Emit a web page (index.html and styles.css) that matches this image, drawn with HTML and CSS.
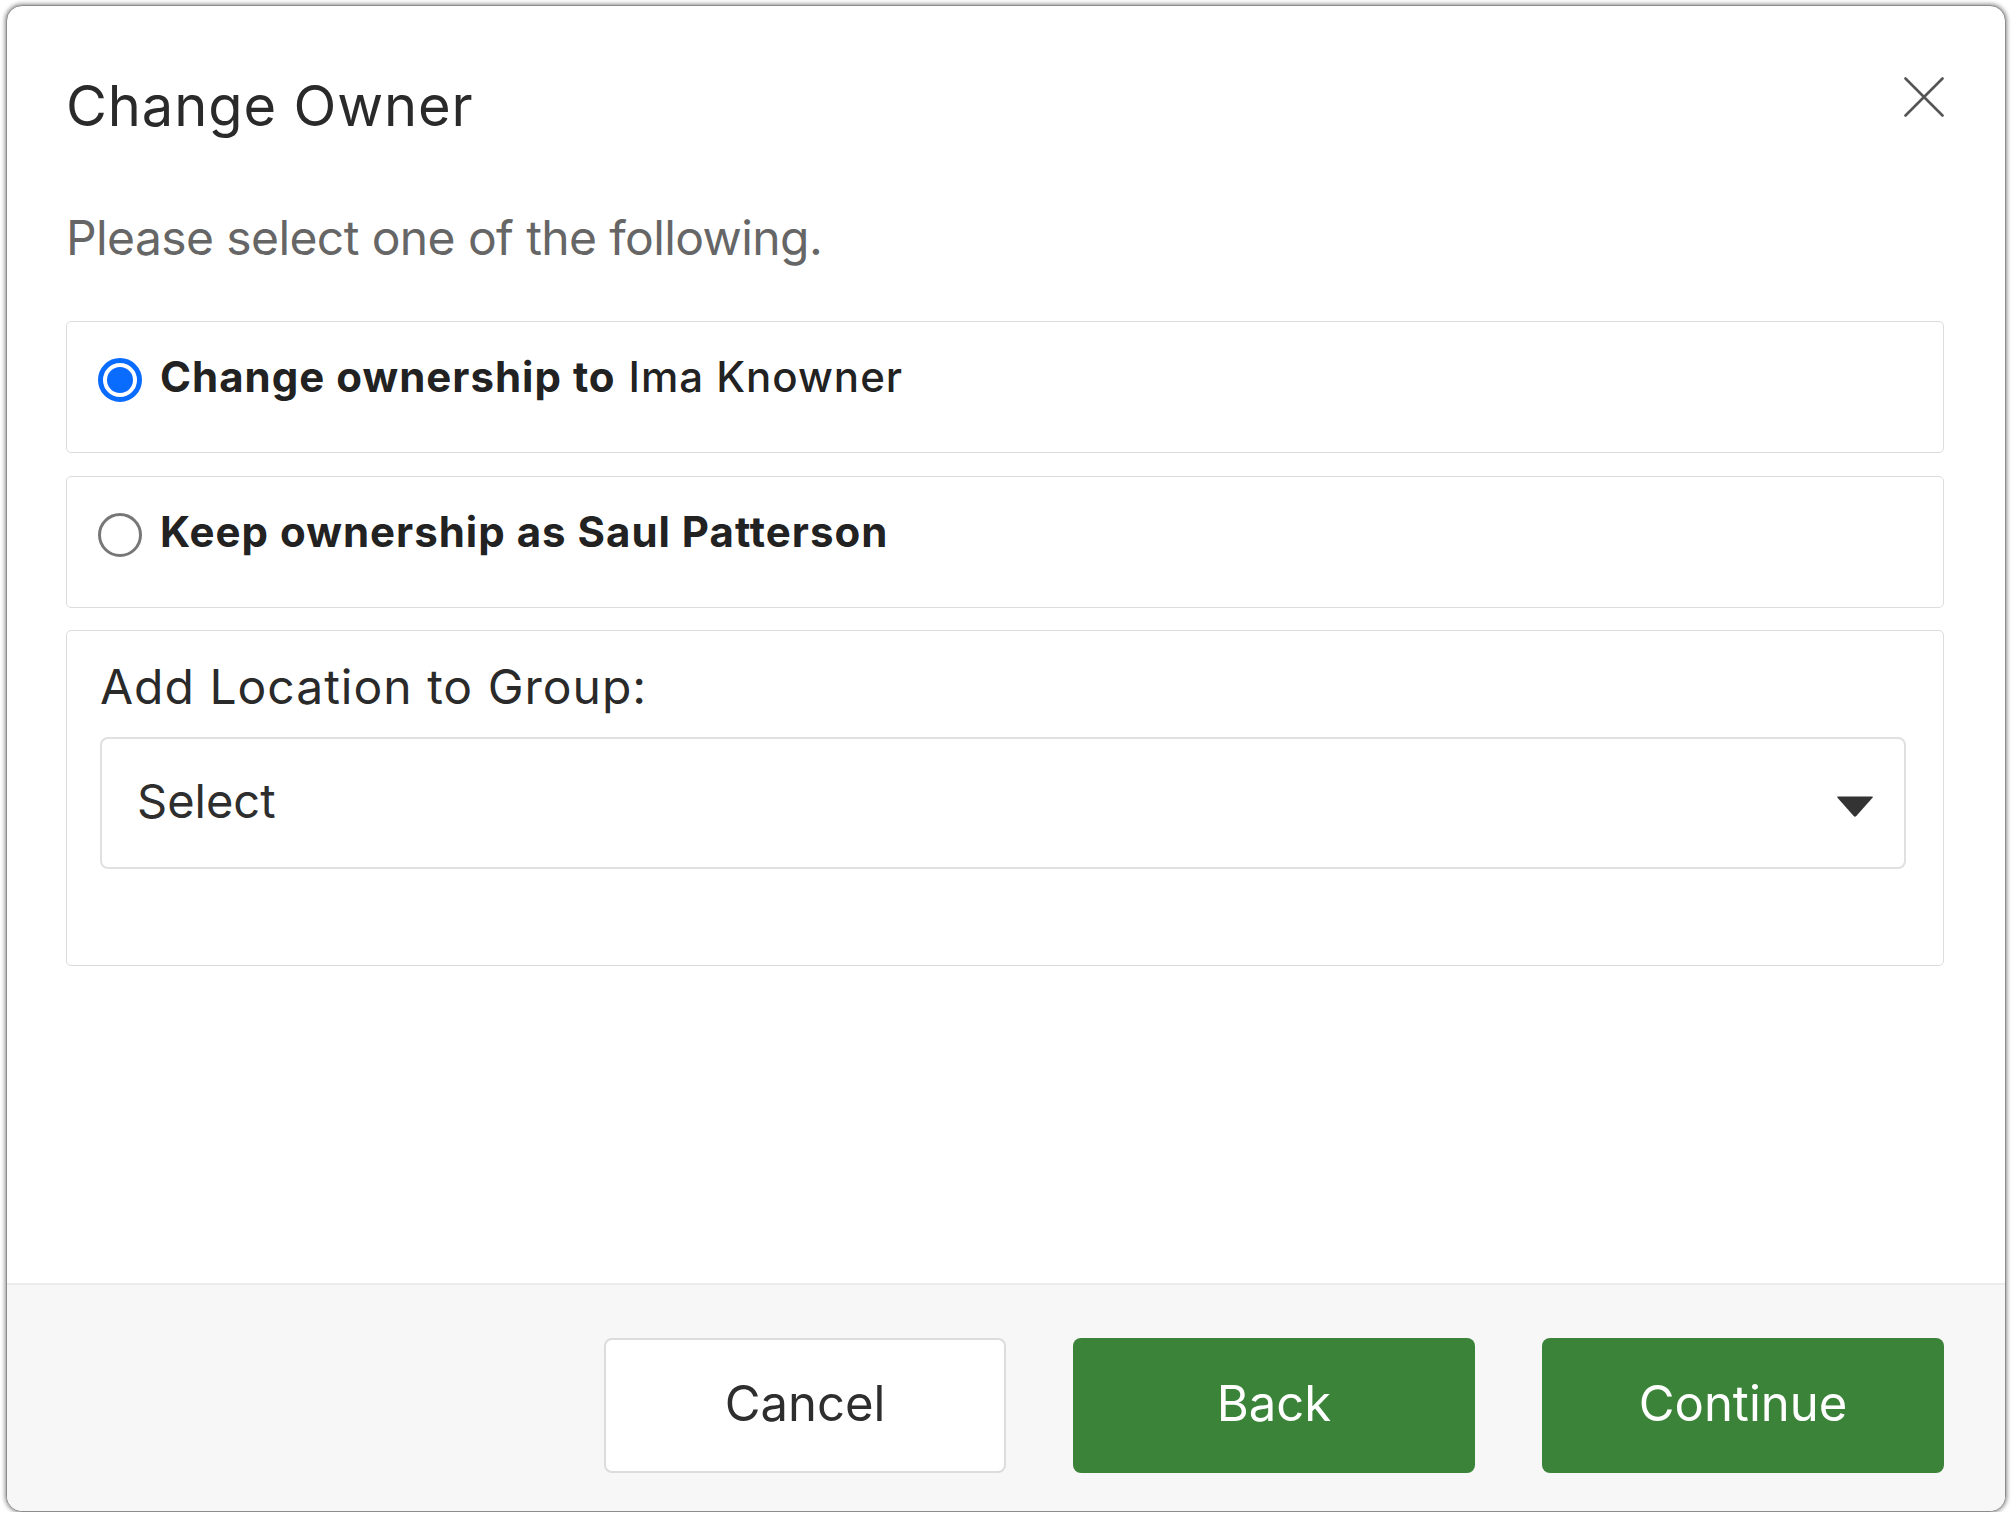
FILE: index.html
```html
<!DOCTYPE html>
<html lang="en">
<head>
<meta charset="utf-8">
<title>Change Owner</title>
<link rel="stylesheet" href="styles.css">
</head>
<body>
<div class="dialog">
  <div class="dialog-body">
    <div class="header">
      <h1 class="title">Change Owner</h1>
      <button class="close" aria-label="Close">
        <svg width="40" height="40" viewBox="0 0 40 40"><path d="M1.5 1.5 L38.5 38.5 M38.5 1.5 L1.5 38.5" stroke="#555" stroke-width="2.6" fill="none" stroke-linecap="round"/></svg>
      </button>
    </div>
    <p class="subtitle">Please select one of the following.</p>
    <label class="option">
      <span class="radio checked"><span class="dot"></span></span>
      <span class="option-text"><b>Change ownership to</b> <span class="name">Ima Knowner</span></span>
    </label>
    <label class="option">
      <span class="radio"></span>
      <span class="option-text"><b>Keep ownership as Saul Patterson</b></span>
    </label>
    <div class="group-box">
      <div class="group-label">Add Location to Group:</div>
      <div class="select">
        <span class="select-text">Select</span>
        <svg class="caret" width="38" height="23" viewBox="0 0 38 23"><path d="M2 1.5 H36 Q37.5 1.5 36.5 2.8 L20.3 21 Q19 22.4 17.7 21 L1.5 2.8 Q0.5 1.5 2 1.5 Z" fill="#333"/></svg>
      </div>
    </div>
  </div>
  <div class="footer">
    <button class="btn btn-default">Cancel</button>
    <button class="btn btn-primary">Back</button>
    <button class="btn btn-primary">Continue</button>
  </div>
</div>
</body>
</html>
```
FILE: styles.css
```css
html, body {
  margin: 0;
  padding: 0;
  background: #fff;
}
body {
  font-family: "Inter", "Lato", "Liberation Sans", sans-serif;
  color: #222;
}
.dialog {
  margin: 5px 0 0 6px;
  width: 2000px;
  height: 1507px;
  box-sizing: border-box;
  border: 1px solid #8c8c8c;
  border-radius: 16px;
  box-shadow: 0 0 4px 1px rgba(0,0,0,0.45);
  overflow: hidden;
  display: flex;
  flex-direction: column;
  background: #fff;
}
.dialog-body {
  flex: 1;
  padding: 67px 61px 0 59px;
}
.header {
  display: flex;
  justify-content: space-between;
  align-items: flex-start;
}
.title {
  margin: 0;
  font-size: 56px;
  line-height: 1.2;
  font-weight: 400;
  letter-spacing: 0.9px;
  color: #2a2a2a;
}
.close {
  margin-top: 4px;
  padding: 0;
  border: 0;
  background: none;
  width: 40px;
  height: 40px;
  display: block;
}
.close svg { display: block; }
.subtitle {
  margin: 69px 0 0 0;
  font-size: 48px;
  line-height: 1.2;
  letter-spacing: -0.6px;
  color: #666;
}
.option {
  margin-top: 54px;
  box-sizing: border-box;
  height: 132px;
  border: 1px solid #dcdcdc;
  border-radius: 5px;
  padding: 30px 0 0 31px;
  display: flex;
  align-items: flex-start;
  gap: 18px;
}
.option + .option { margin-top: 23px; }
.option-text {
  font-size: 42px;
  line-height: 1.2;
  letter-spacing: 1px;
  color: #222;
}
.option-text b { font-weight: 700; }
.option-text .name { font-weight: 500; }
.radio {
  margin-top: 6px;
  width: 44px;
  height: 44px;
  box-sizing: border-box;
  border-radius: 50%;
  border: 3.5px solid #777;
  display: flex;
  align-items: center;
  justify-content: center;
  flex: none;
}
.radio.checked {
  border: 5px solid #0a6cff;
}
.radio .dot {
  width: 26px;
  height: 26px;
  border-radius: 50%;
  background: #0a6cff;
}
.group-box {
  margin-top: 22px;
  box-sizing: border-box;
  height: 336px;
  border: 1px solid #dcdcdc;
  border-radius: 5px;
  padding: 27px 37px 0 33px;
}
.group-label {
  font-size: 48px;
  line-height: 1.2;
  letter-spacing: 1px;
  color: #2a2a2a;
}
.select {
  margin-top: 22px;
  box-sizing: border-box;
  height: 132px;
  border: 2px solid #e0e0e0;
  border-radius: 8px;
  padding: 0 30px 0 35px;
  display: flex;
  align-items: center;
  justify-content: space-between;
}
.select-text {
  font-size: 47px;
  line-height: 1.2;
  color: #2e2e2e;
  margin-top: -4px;
}
.caret { display: block; margin-top: 6px; }
.footer {
  flex: none;
  height: 228px;
  box-sizing: border-box;
  border-top: 2px solid #ececec;
  background: #f7f7f7;
  padding: 53px 61px 0 0;
  display: flex;
  justify-content: flex-end;
  align-items: flex-start;
  gap: 67px;
}
.btn {
  width: 402px;
  height: 135px;
  box-sizing: border-box;
  border-radius: 8px;
  font-family: "Inter", "Lato", "Liberation Sans", sans-serif;
  font-size: 49px;
  line-height: 1;
  padding: 0 0 5px 0;
  cursor: pointer;
}
.btn-default {
  background: #fff;
  border: 2px solid #dcdcdc;
  color: #2e2e2e;
}
.btn-primary {
  background: #3c833a;
  border: 0;
  color: #fff;
}
```
